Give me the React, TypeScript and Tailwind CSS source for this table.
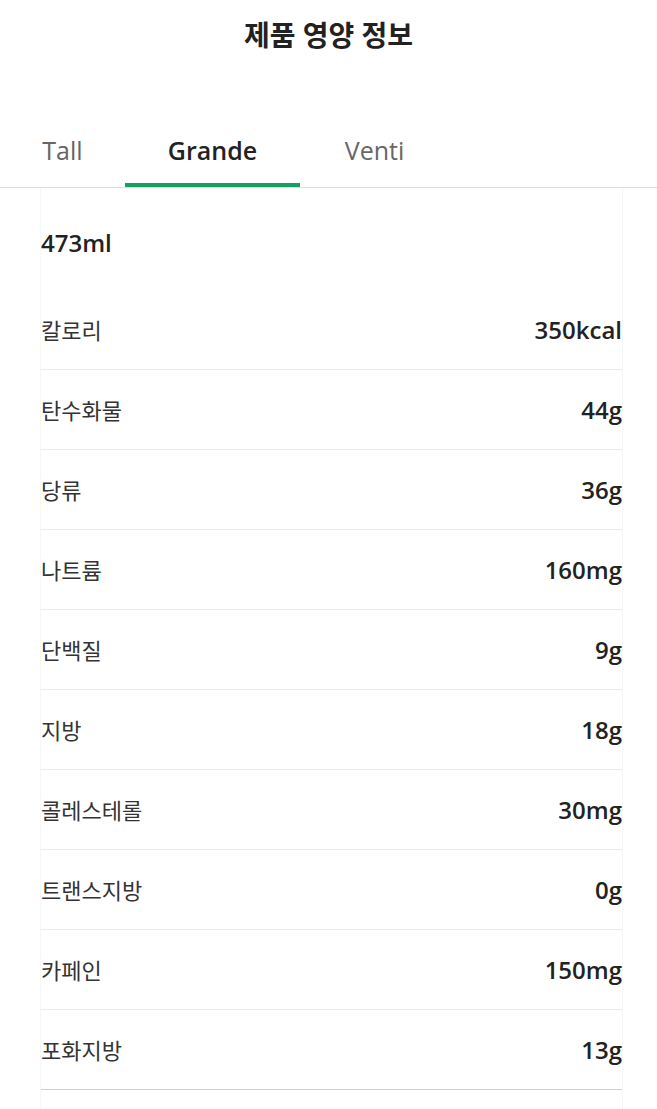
const FONT = { fontFamily: '"Open Sans", "Noto Sans CJK KR", sans-serif' };

const sizes = [
  { name: "Tall", width: "w-[125px]" },
  { name: "Grande", width: "w-[175px]" },
  { name: "Venti", width: "w-[149px]" },
];

const rows: [string, string][] = [
  ["칼로리", "350kcal"],
  ["탄수화물", "44g"],
  ["당류", "36g"],
  ["나트륨", "160mg"],
  ["단백질", "9g"],
  ["지방", "18g"],
  ["콜레스테롤", "30mg"],
  ["트랜스지방", "0g"],
  ["카페인", "150mg"],
  ["포화지방", "13g"],
];

export default function App() {
  const active = "Grande";
  return (
    <div className="min-h-[1109px] bg-white text-[#222]" style={FONT}>
      <h1 className="pt-[15px] text-center text-[28px] font-semibold leading-[40px] text-[#222]">제품 영양 정보</h1>

      <div className="mt-[75px] flex border-b border-[#dcdcdc]">
        {sizes.map((s) => (
          <div key={s.name} className={`${s.width} flex flex-col items-center`}>
            <span
              className={
                s.name === active
                  ? "text-[25px] font-semibold leading-[40px] text-[#222]"
                  : "text-[25px] leading-[40px] text-[#666]"
              }
            >
              {s.name}
            </span>
            <div className={s.name === active ? "mt-[13px] h-[4px] w-full bg-[#14a064]" : "mt-[13px] h-[4px] w-full"} />
          </div>
        ))}
      </div>

      <div className="ml-[40px] mr-[34px] border-x border-[#f6f7f7]">
        <div className="h-[102px] pt-[40px] text-[24px] font-semibold leading-[30px]">473ml</div>
        {rows.map(([label, value], i) => (
          <div
            key={label}
            className={
              i === rows.length - 1
                ? "flex h-[80px] items-center justify-between border-b border-[#cfcfcf]"
                : "flex h-[80px] items-center justify-between border-b border-[#ebebeb]"
            }
          >
            <span className="text-[22px] leading-[30px] text-[#333]">{label}</span>
            <span className="text-[24px] font-semibold leading-[30px] text-[#222]">{value}</span>
          </div>
        ))}
        <div className="h-[40px]" />
      </div>
    </div>
  );
}
